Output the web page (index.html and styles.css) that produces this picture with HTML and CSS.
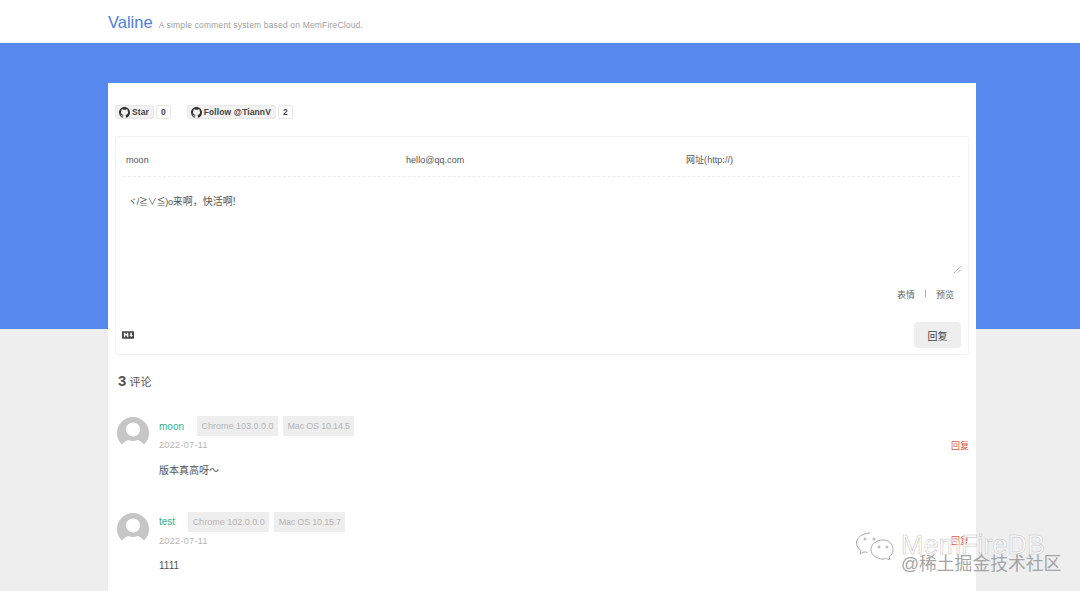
FILE: index.html
```html
<!DOCTYPE html>
<html lang="zh">
<head>
<meta charset="utf-8">
<title>Valine</title>
<link rel="stylesheet" href="styles.css">
</head>
<body>
<header class="topbar">
  <span class="brand">Valine</span>
  <span class="tagline">A simple comment system based on MemFireCloud.</span>
</header>
<div class="hero"></div>
<main class="card">
  <div class="badges">
    <div class="badge-group">
      <span class="gh-btn"><svg class="gh-icon" viewBox="0 0 16 16"><path d="M8 0C3.58 0 0 3.58 0 8c0 3.54 2.29 6.53 5.47 7.59.4.07.55-.17.55-.38 0-.19-.01-.82-.01-1.49-2.01.37-2.53-.49-2.69-.94-.09-.23-.48-.94-.82-1.13-.28-.15-.68-.52-.01-.53.63-.01 1.08.58 1.23.82.72 1.21 1.87.87 2.33.66.07-.52.28-.87.51-1.07-1.78-.2-3.64-.89-3.64-3.95 0-.87.31-1.59.82-2.15-.08-.2-.36-1.02.08-2.12 0 0 .67-.21 2.2.82.64-.18 1.32-.27 2-.27s1.36.09 2 .27c1.53-1.04 2.2-.82 2.2-.82.44 1.1.16 1.92.08 2.12.51.56.82 1.27.82 2.15 0 3.07-1.87 3.75-3.65 3.95.29.25.54.73.54 1.48 0 1.07-.01 1.93-.01 2.2 0 .21.15.46.55.38A8.01 8.01 0 0 0 16 8c0-4.42-3.58-8-8-8z"/></svg>Star</span>
      <span class="gh-count">0</span>
    </div>
    <div class="badge-group">
      <span class="gh-btn"><svg class="gh-icon" viewBox="0 0 16 16"><path d="M8 0C3.58 0 0 3.58 0 8c0 3.54 2.29 6.53 5.47 7.59.4.07.55-.17.55-.38 0-.19-.01-.82-.01-1.49-2.01.37-2.53-.49-2.69-.94-.09-.23-.48-.94-.82-1.13-.28-.15-.68-.52-.01-.53.63-.01 1.08.58 1.23.82.72 1.21 1.87.87 2.33.66.07-.52.28-.87.51-1.07-1.78-.2-3.64-.89-3.64-3.95 0-.87.31-1.59.82-2.15-.08-.2-.36-1.02.08-2.12 0 0 .67-.21 2.2.82.64-.18 1.32-.27 2-.27s1.36.09 2 .27c1.53-1.04 2.2-.82 2.2-.82.44 1.1.16 1.92.08 2.12.51.56.82 1.27.82 2.15 0 3.07-1.87 3.75-3.65 3.95.29.25.54.73.54 1.48 0 1.07-.01 1.93-.01 2.2 0 .21.15.46.55.38A8.01 8.01 0 0 0 16 8c0-4.42-3.58-8-8-8z"/></svg>Follow @TiannV</span>
      <span class="gh-count">2</span>
    </div>
  </div>

  <section class="editor">
    <div class="fields">
      <span class="field">moon</span>
      <span class="field">hello@qq.com</span>
      <span class="field">网址(http://)</span>
    </div>
    <div class="textarea">
      <span class="kaomoji">ヾ/≧∨≦)o</span>来啊，快活啊!
      <svg class="grip" viewBox="0 0 8 8"><path d="M0 8 8 0M4 8l4-4"/></svg>
    </div>
    <div class="tools">
      <span>表情</span><span class="sep"></span><span>预览</span>
    </div>
    <div class="actions">
      <svg class="md" viewBox="0 0 16 10"><path fill-rule="evenodd" d="M1 0h14a1 1 0 0 1 1 1v8a1 1 0 0 1-1 1H1a1 1 0 0 1-1-1V1a1 1 0 0 1 1-1zm1.500 2v6h1.600V4.800L5.500 7l1.400-2.200V8h1.600V2H6.900L5.500 4.200 4.100 2zm8.500 0v3H10l2.300 3 2.200-3h-1.400V2z"/></svg>
      <span class="submit">回复</span>
    </div>
  </section>

  <h2 class="count"><b>3</b> 评论</h2>

  <article class="comment">
    <svg class="avatar" viewBox="0 0 32 32"><circle cx="16" cy="16" r="16" fill="#c6c6c6"/><circle cx="16" cy="12.500" r="7" fill="#fff"/><path d="M3 34c0-6 4-9.500 8.500-11 3 1.300 6 1.300 9 0 4.500 1.500 8.500 5 8.500 11z" fill="#fff"/></svg>
    <div class="body">
      <div class="meta"><span class="nick">moon</span><span class="tag">Chrome 103.0.0.0</span><span class="tag tag-os">Mac OS 10.14.5</span></div>
      <div class="date-row"><span class="date">2022-07-11</span><span class="reply">回复</span></div>
      <p class="text">版本真高呀～</p>
    </div>
  </article>

  <article class="comment">
    <svg class="avatar" viewBox="0 0 32 32"><circle cx="16" cy="16" r="16" fill="#c6c6c6"/><circle cx="16" cy="12.500" r="7" fill="#fff"/><path d="M3 34c0-6 4-9.500 8.500-11 3 1.300 6 1.300 9 0 4.500 1.500 8.500 5 8.500 11z" fill="#fff"/></svg>
    <div class="body">
      <div class="meta"><span class="nick">test</span><span class="tag">Chrome 102.0.0.0</span><span class="tag tag-os">Mac OS 10.15.7</span></div>
      <div class="date-row"><span class="date">2022-07-11</span><span class="reply">回复</span></div>
      <p class="text">1111</p>
    </div>
  </article>
</main>

<div class="watermark">
  <svg class="wechat" viewBox="0 0 40 28" fill="none"><path d="M15 1C8 1 1.500 5.500 1.500 11c0 3 1.700 5.600 4.500 7.500L5 22l4-2.200c1 .3 2.200.5 3.500.5"/><path d="M28 8c-6.500 0-12 4-12 9.500S21.500 27 28 27c1.300 0 2.500-.2 3.600-.5l3.400 1.500-1-3c2.600-1.700 4-4.300 4-7.200C38 12 34 8 28 8z"/><circle cx="10" cy="7" r="1"/><circle cx="19" cy="7" r="1"/><circle cx="24" cy="15" r="1"/><circle cx="32" cy="15" r="1"/></svg>
  <div class="wm-text">
    <div class="wm-line1">MemFireDB</div>
    <div class="wm-line2">@稀土掘金技术社区</div>
  </div>
</div>
</body>
</html>
```

FILE: styles.css
```css
* { box-sizing: border-box; }
html, body { margin: 0; height: 591px; overflow: hidden; }
body {
  position: relative;
  background: #eeeeee;
  font-family: "Liberation Sans", "Noto Sans CJK SC", sans-serif;
  color: #555;
}
.topbar {
  height: 43px;
  background: #fff;
  padding: 12px 0 0 108px;
  display: flex;
  align-items: baseline;
  gap: 6px;
}
.brand { font-size: 16.500px; line-height: 20px; color: #4d80e0; }
.tagline { font-size: 8.500px; letter-spacing: .17px; color: #a0a0a0; }
.hero { height: 286px; background: #5788ee; }
.card {
  width: 868px;
  height: 508px;
  margin: -246px 0 0 108px;
  background: #fff;
  padding: 0 7px;
}
.badges { display: flex; gap: 16px; padding-top: 22px; height: 53px; }
.badge-group { display: flex; gap: 2px; height: 14px; }
.gh-btn, .gh-count {
  display: flex; align-items: center;
  font-size: 8.500px; font-weight: 700; letter-spacing: .1px; color: #444;
  height: 14px;
  border: 1px solid #e8e8e8;
  border-radius: 2px;
}
.gh-btn { padding: 0 4px 0 3px; background: #f2f2f2; gap: 2px; }
.gh-count { padding: 0 4px; background: #fff; }
.gh-icon { width: 11px; height: 11px; fill: #333; }
.editor {
  height: 219px;
  border: 1px solid #f3f3f3;
  border-radius: 3px;
  padding: 0 7px;
  display: flex;
  flex-direction: column;
}
.fields {
  display: grid;
  grid-template-columns: repeat(3, 280px);
  height: 40px;
  align-items: center;
  padding: 6px 0 0 3px;
  margin-right: 1px;
  border-bottom: 1px dashed #ececec;
  font-size: 9px;
  letter-spacing: .05px;
  color: #555;
}
.textarea { position: relative; height: 96px; padding: 17px 5px; font-size: 10px; line-height: 16px; color: #555; }
.kaomoji { font-size: 9px; letter-spacing: -.25px; }
.grip { position: absolute; right: 0; bottom: 0; width: 7px; height: 7px; stroke: #888; stroke-width: .7; fill: none; }
.tools {
  display: flex; justify-content: flex-end; gap: 10px;
  height: 44px;
  padding: 15px 7px 0 0;
  font-size: 9px;
  color: #666;
}
.sep { width: 1px; height: 7px; margin-top: 2px; background: #aaa; }
.actions { display: flex; justify-content: space-between; align-items: center; height: 31px; padding-top: 5px; }
.md { width: 12px; height: 8px; fill: #444; margin-left: -1px; }
.submit {
  width: 47px; height: 26px;
  display: flex; align-items: center; justify-content: center;
  background: #eeeeee;
  border-radius: 4px;
  font-size: 10px;
  color: #444;
}
.count {
  margin: 0;
  padding: 17px 0 0 3px;
  height: 61px;
  font-size: 11px;
  font-weight: 400;
  color: #555;
}
.count b { font-size: 15px; font-weight: 700; }
.comment { display: flex; gap: 10px; padding-left: 2px; }
.comment + .comment { margin-top: 33px; }
.avatar { width: 32px; height: 32px; margin-top: 1px; flex: none; }
.body { flex: 1; }
.meta { display: flex; align-items: center; height: 20px; }
.nick { color: #35b08c; font-size: 10px; margin-right: 13px; }
.tag {
  height: 20px;
  line-height: 20px;
  padding: 0 4.500px;
  margin-right: 5px;
  background: #eeeeee;
  color: #b5b5b5;
  font-size: 9px;
}
.tag-os { letter-spacing: -.2px; }
.date-row { display: flex; justify-content: space-between; align-items: center; height: 18px; }
.date { font-size: 9px; color: #b5b5b5; letter-spacing: .35px; }
.reply { font-size: 9px; color: #e0533f; }
.text { margin: 8.500px 0 0; font-size: 10px; line-height: 16px; color: #555; }
.watermark {
  position: absolute;
  left: 855px;
  top: 530px;
  display: flex;
  gap: 6px;
}
.wm-line1 { font-size: 27px; line-height: 30px; color: rgba(255, 255, 255, .7); -webkit-text-stroke: .5px #c4c4c4; }
.wm-line2 { margin-top: -7px; font-size: 17.800px; line-height: 22px; color: #a5a5a5; white-space: nowrap; }
.wechat { width: 40px; height: 28px; stroke: #aaa; stroke-width: 1; flex: none; margin-top: 2px; }
```
